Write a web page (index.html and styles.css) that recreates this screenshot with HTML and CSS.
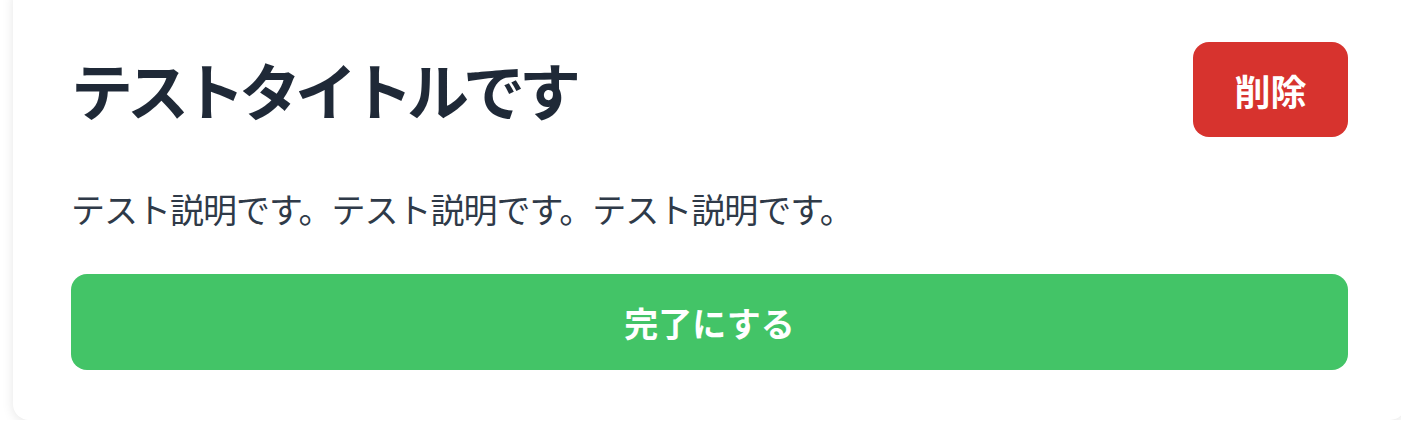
FILE: index.html
```html
<!DOCTYPE html>
<html lang="ja">
<head>
<meta charset="utf-8">
<link rel="stylesheet" href="styles.css">
</head>
<body>
<div class="card">
  <div class="card-header">
    <h1 class="title">テストタイトルです</h1>
    <button class="btn-delete">削除</button>
  </div>
  <p class="desc">テスト説明です。テスト説明です。テスト説明です。</p>
  <button class="btn-done">完了にする</button>
</div>
</body>
</html>
```
FILE: styles.css
```css
html, body {
  margin: 0;
  padding: 0;
  overflow: hidden;
  background: #ffffff;
}
body {
  font-family: "Noto Sans CJK JP", "Noto Sans", sans-serif;
}
.card {
  box-sizing: border-box;
  width: 1393px;
  margin: -16px 0 0 13px;
  padding: 58px 58px 50px;
  background: #ffffff;
  border-radius: 16px;
  box-shadow: 0 2px 12px rgba(0, 0, 0, 0.10);
}
.card-header {
  display: flex;
  align-items: center;
  justify-content: space-between;
  height: 95px;
}
.title {
  margin: 0;
  font-size: 62px;
  font-weight: 700;
  letter-spacing: -6px;
  line-height: 1.2;
  color: #1f2937;
}
.btn-delete {
  width: 155px;
  height: 95px;
  border: none;
  border-radius: 16px;
  background: #d7332e;
  color: #ffffff;
  font-family: inherit;
  font-size: 36px;
  font-weight: 700;
  padding: 0;
}
.desc {
  margin: 48px 0 41px;
  font-size: 34px;
  line-height: 48px;
  letter-spacing: -1px;
  color: #2f3a48;
}
.btn-done {
  display: block;
  width: 100%;
  height: 96px;
  border: none;
  border-radius: 16px;
  background: #43c467;
  color: #ffffff;
  font-family: inherit;
  font-size: 34px;
  font-weight: 700;
  padding: 0;
}
```
